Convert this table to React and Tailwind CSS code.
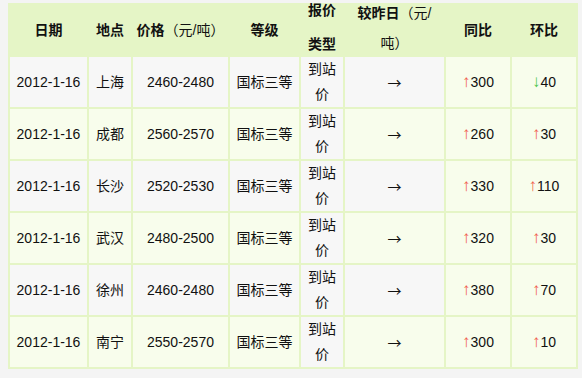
const rows = [
  { city: '上海', price: '2460-2480', yoy: ['up', '300'], mom: ['down', '40'] },
  { city: '成都', price: '2560-2570', yoy: ['up', '260'], mom: ['up', '30'] },
  { city: '长沙', price: '2520-2530', yoy: ['up', '330'], mom: ['up', '110'] },
  { city: '武汉', price: '2480-2500', yoy: ['up', '320'], mom: ['up', '30'] },
  { city: '徐州', price: '2460-2480', yoy: ['up', '380'], mom: ['up', '70'] },
  { city: '南宁', price: '2550-2570', yoy: ['up', '300'], mom: ['up', '10'] },
];

function Change({ dir, value }) {
  return (
    <span>
      {dir === 'up' ? (
        <span className="text-[17px] leading-none text-[#f0604c]">↑</span>
      ) : (
        <span className="text-[17px] leading-none text-[#4fc64a]">↓</span>
      )}
      {value}
    </span>
  );
}

export default function App() {
  const gray = 'bg-[#f7f7f7]';
  const green = 'bg-[#f8fdec]';

  return (
    <div className="min-h-[378px] w-[582px] bg-[#f4f4f4] pt-[3px] pl-[8px] font-['Liberation_Sans','Noto_Sans_CJK_SC',sans-serif] text-[14px] text-[#111]">
      <table className="w-[570px] table-fixed border-separate border-spacing-[2px] bg-[#e5f5c6] text-center">
        <colgroup>
          <col className="w-[77px]" />
          <col className="w-[42px]" />
          <col className="w-[95px]" />
          <col className="w-[69px]" />
          <col className="w-[42px]" />
          <col className="w-[99px]" />
          <col className="w-[64px]" />
          <col className="w-[64px]" />
        </colgroup>
        <thead>
          <tr className="h-[50px] bg-[#e5f5c6] font-bold">
            <th className="p-0">日期</th>
            <th className="p-0">地点</th>
            <th className="p-0 whitespace-nowrap">
              价格<span className="font-normal">（元/吨）</span>
            </th>
            <th className="p-0">等级</th>
            <th className="px-[4px] py-0 align-top">
              <div className="h-[50px]">
                <div className="-mt-[12px] leading-[34px]">报价类型</div>
              </div>
            </th>
            <th className="px-[4px] py-0 align-top">
              <div className="h-[50px]">
                <div className="-mt-[7px] leading-[30px]">
                  较昨日<span className="font-normal">（元/吨）</span>
                </div>
              </div>
            </th>
            <th className="p-0">同比</th>
            <th className="p-0">环比</th>
          </tr>
        </thead>
        <tbody>
          {rows.map((r, i) => {
            const base = i % 2 === 0 ? gray : green;
            return (
              <tr key={r.city} className="h-[50px] leading-[25px]">
                <td className={`${base} p-0`}>2012-1-16</td>
                <td className={`${base} p-0`}>{r.city}</td>
                <td className={`${base} p-0`}>{r.price}</td>
                <td className={`${base} p-0`}>国标三等</td>
                <td className={`${gray} px-[4px] py-0`}>到站价</td>
                <td className={`${base} p-0 font-['Noto_Sans_CJK_SC',sans-serif]`}>→</td>
                <td className={`${green} p-0`}>
                  <Change dir={r.yoy[0]} value={r.yoy[1]} />
                </td>
                <td className={`${green} p-0`}>
                  <Change dir={r.mom[0]} value={r.mom[1]} />
                </td>
              </tr>
            );
          })}
        </tbody>
      </table>
    </div>
  );
}
